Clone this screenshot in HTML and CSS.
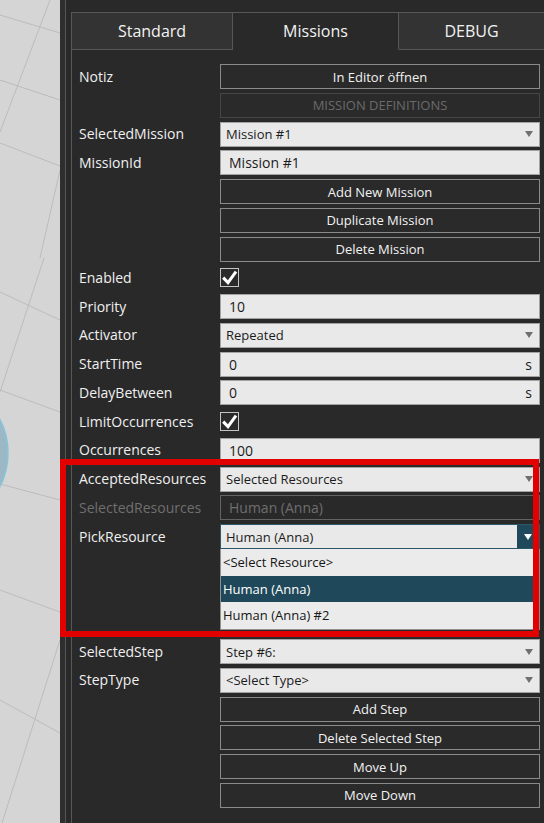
FILE: index.html
```html
<!DOCTYPE html>
<html lang="de">
<head>
<meta charset="utf-8">
<title>Missions</title>
<link rel="stylesheet" href="styles.css">
</head>
<body>
<div class="app">
  <div class="canvas">
    <svg class="scene" width="60" height="823" viewBox="0 0 60 823">
      <g stroke="#bcbcbc" stroke-width="1" fill="none">
        <line x1="0" y1="15" x2="60" y2="33"/>
        <line x1="50" y1="0" x2="0" y2="132"/>
        <line x1="0" y1="80" x2="60" y2="100"/>
        <line x1="0" y1="143" x2="60" y2="166"/>
        <line x1="0" y1="292" x2="60" y2="320"/>
        <line x1="44" y1="258" x2="0" y2="392"/>
        <line x1="0" y1="390" x2="60" y2="412"/>
        <line x1="0" y1="484" x2="60" y2="500"/>
        <line x1="0" y1="590" x2="60" y2="612"/>
        <line x1="0" y1="700" x2="60" y2="733"/>
        <line x1="60" y1="640" x2="2" y2="823"/>
        <line x1="60" y1="170" x2="40" y2="258"/>
      </g>
      <circle cx="-64" cy="453" r="72" fill="#9bb8c4" stroke="#86c4dc" stroke-width="1.5"/>
    </svg>
  </div>
  <div class="panel">
    <div class="strip"></div>
    <div class="inner">
      <div class="tabs">
        <div class="tab">Standard</div>
        <div class="tab active">Missions</div>
        <div class="tab last">DEBUG</div>
      </div>
      <div class="content">
        <div class="grid">
          <div class="label">Notiz</div>
          <div class="btn">In Editor öffnen</div>

          <div></div>
          <div class="btn disabled">MISSION DEFINITIONS</div>

          <div class="label">SelectedMission</div>
          <div class="combo"><span>Mission #1</span><i class="arrow"></i></div>

          <div class="label">MissionId</div>
          <div class="field"><span>Mission #1</span></div>

          <div></div>
          <div class="btn">Add New Mission</div>

          <div></div>
          <div class="btn">Duplicate Mission</div>

          <div></div>
          <div class="btn">Delete Mission</div>

          <div class="label">Enabled</div>
          <div class="cell"><span class="check"><svg width="19" height="19" viewBox="0 0 19 19"><path d="M3.2 9.6 L8 14.6 L16 3.6" fill="none" stroke="#ffffff" stroke-width="3"/></svg></span></div>

          <div class="label">Priority</div>
          <div class="field"><span>10</span></div>

          <div class="label">Activator</div>
          <div class="combo"><span>Repeated</span><i class="arrow"></i></div>

          <div class="label">StartTime</div>
          <div class="field"><span>0</span><span class="unit">s</span></div>

          <div class="label">DelayBetween</div>
          <div class="field"><span>0</span><span class="unit">s</span></div>

          <div class="label">LimitOccurrences</div>
          <div class="cell"><span class="check"><svg width="19" height="19" viewBox="0 0 19 19"><path d="M3.2 9.6 L8 14.6 L16 3.6" fill="none" stroke="#ffffff" stroke-width="3"/></svg></span></div>

          <div class="label">Occurrences</div>
          <div class="field"><span>100</span></div>

          <div class="label">AcceptedResources</div>
          <div class="combo"><span>Selected Resources</span><i class="arrow"></i></div>

          <div class="label disabled">SelectedResources</div>
          <div class="field disabled"><span>Human (Anna)</span></div>

          <div class="label">PickResource</div>
          <div class="cell popup-host">
            <div class="combo open"><span>Human (Anna)</span><span class="drop-btn"><i class="arrow white"></i></span></div>
            <ul class="dropdown">
              <li>&lt;Select Resource&gt;</li>
              <li class="selected">Human (Anna)</li>
              <li>Human (Anna) #2</li>
            </ul>
          </div>

          <div class="spacer"></div>

          <div class="label">SelectedStep</div>
          <div class="combo"><span>Step #6:</span><i class="arrow"></i></div>

          <div class="label">StepType</div>
          <div class="combo"><span>&lt;Select Type&gt;</span><i class="arrow"></i></div>

          <div></div>
          <div class="btn">Add Step</div>

          <div></div>
          <div class="btn">Delete Selected Step</div>

          <div></div>
          <div class="btn">Move Up</div>

          <div></div>
          <div class="btn">Move Down</div>
        </div>
      </div>
    </div>
  </div>
  <div class="highlight"></div>
</div>
</body>
</html>
```

FILE: styles.css
```css
* { box-sizing: border-box; }

html, body {
  margin: 0;
  padding: 0;
}

body {
  width: 544px;
  height: 823px;
  overflow: hidden;
  background: #292929;
  font-family: "Open Sans", "Noto Sans", sans-serif;
}

.app {
  position: relative;
  display: flex;
  width: 544px;
  height: 823px;
}

.canvas {
  width: 60px;
  flex: none;
  background: #d5d5d5;
  overflow: hidden;
}

.scene { display: block; }

.panel {
  flex: 1;
  display: flex;
  background: #292929;
  min-width: 0;
}

.strip {
  width: 6px;
  flex: none;
  background: #2e2e2e;
  border-right: 1px solid #555555;
}

.inner {
  flex: 1;
  padding: 12px 0 0 5px;
  min-width: 0;
}

.tabs {
  display: flex;
  height: 38px;
}

.tab {
  height: 38px;
  display: flex;
  align-items: center;
  justify-content: center;
  background: #333333;
  color: #f2f2f2;
  font-size: 16px;
  border-top: 1px solid #575757;
  border-bottom: 1px solid #575757;
  border-right: 1px solid #575757;
}

.tab:first-child {
  width: 162px;
  border-left: 1px solid #575757;
}

.tab.active {
  width: 166px;
  background: #292929;
  border-bottom-color: transparent;
}

.tab.last {
  flex: 1;
  border-right: none;
}

.content {
  border-left: 1px solid #575757;
  padding: 14px 0 0 7px;
  height: 773px;
}

.grid {
  display: grid;
  grid-template-columns: 141px 320px;
  grid-auto-rows: 25px;
  row-gap: 3.75px;
}

.label {
  align-self: center;
  color: #f0f0f0;
  font-size: 14px;
  line-height: 19px;
  white-space: nowrap;
  margin-top: -1px;
}

.label.disabled { color: #6f6f6f; }

.btn {
  border: 1px solid #8a8a8a;
  background: #2a2a2a;
  color: #f2f2f2;
  font-size: 13px;
  display: flex;
  align-items: center;
  justify-content: center;
}

.btn.disabled {
  border-color: #464646;
  color: #6a6a6a;
}

.combo, .field {
  display: flex;
  align-items: center;
  background: #e9e9e9;
  border: 1px solid #a3a3a3;
  color: #1b1b1b;
  white-space: nowrap;
}

.combo {
  font-size: 13px;
  padding-left: 5px;
}

.field {
  font-size: 14px;
  padding-left: 8px;
}

.field.disabled {
  background: #292929;
  border-color: #636363;
  color: #6e6e6e;
}

.unit {
  margin-left: auto;
  padding-right: 7px;
}

.arrow {
  display: block;
  margin-left: auto;
  margin-right: 6px;
  width: 0;
  height: 0;
  border-left: 4.5px solid transparent;
  border-right: 4.5px solid transparent;
  border-top: 6px solid #707070;
}

.arrow.white {
  margin: 0;
  border-top-color: #ffffff;
}

.cell {
  display: flex;
  align-items: center;
}

.check {
  width: 19px;
  height: 19px;
  border: 1px solid #c4c4c4;
  background: #2a2a2a;
  display: block;
  position: relative;
}

.check svg {
  position: absolute;
  left: -1px;
  top: -1px;
}

.popup-host {
  position: relative;
  align-items: stretch;
}

.combo.open {
  flex: 1;
  border-color: #2a586a;
  padding-right: 0;
}

.drop-btn {
  margin-left: auto;
  align-self: stretch;
  width: 22px;
  background: #1f495a;
  display: flex;
  align-items: center;
  justify-content: center;
}

.dropdown {
  position: absolute;
  z-index: 2;
  top: 100%;
  left: 0;
  right: 0;
  margin: 0;
  padding: 0;
  list-style: none;
  background: #ebebeb;
  border: 1px solid #8f8f8f;
  border-top: none;
}

.dropdown li {
  height: 26.5px;
  display: flex;
  align-items: center;
  padding-left: 2px;
  font-size: 13px;
  color: #161616;
}

.dropdown li.selected {
  background: #1f495a;
  color: #ffffff;
}

.spacer {
  grid-column: 1 / -1;
  grid-row: span 3;
}

.highlight {
  position: absolute;
  z-index: 5;
  left: 60px;
  top: 459px;
  width: 479px;
  height: 178px;
  border: 6px solid #e30000;
  pointer-events: none;
}
```
